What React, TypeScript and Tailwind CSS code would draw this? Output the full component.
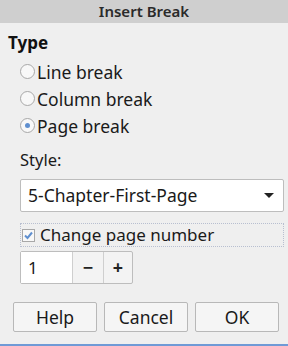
import React from "react";

const font = { fontFamily: '"Noto Sans", "Open Sans", sans-serif' };

function Radio({ checked, label }: { checked?: boolean; label: string }) {
  return (
    <div className="flex items-center h-[27px]">
      <div className="w-[15px] h-[15px] rounded-full border border-[#a8a8a8] bg-[#f8f8f8] flex items-center justify-center">
        {checked && <div className="w-[5px] h-[5px] rounded-full bg-[#5f8fcf]" />}
      </div>
      <span className="ml-[2px] text-[17.5px] text-[#1a1a1a] leading-[22px]">{label}</span>
    </div>
  );
}

export default function App() {
  return (
    <div className="w-[288px] h-[346px] bg-[#efefef] flex flex-col" style={font}>
      <div className="h-[23px] bg-[#cfcfcf] flex items-center justify-center text-[15px] font-semibold text-[#2a2a2a]">
        Insert Break
      </div>
      <div className="px-[8px] pt-[9px] flex-1 flex flex-col">
        <div className="text-[17px] font-bold text-[#111] leading-[22px]">Type</div>
        <div className="pl-[12px] flex flex-col mt-[4px]">
          <Radio label="Line break" />
          <Radio label="Column break" />
          <Radio checked label="Page break" />
        </div>
        <div className="pl-[12px] mt-[10px] text-[16.5px] text-[#1a1a1a] leading-[22px]">Style:</div>
        <div className="ml-[12px] mt-[8px] w-[264px] h-[33px] bg-white border border-[#bdbdbd] rounded-[2px] flex items-center justify-between pl-[7px] pr-[9px]">
          <span className="text-[17.5px] text-[#1a1a1a]">5-Chapter-First-Page</span>
          <svg width="10" height="6" viewBox="0 0 10 6"><polygon points="0,0 10,0 5,5" fill="#222" /></svg>
        </div>
        <div className="ml-[12px] mt-[11px] w-[264px] h-[24px] border border-dotted border-[#b8bfd0] flex items-center pl-[1px]">
          <div className="w-[13px] h-[13px] border border-[#a8a8a8] bg-[#f8f8f8] flex items-center justify-center">
            <svg width="11" height="11" viewBox="0 0 11 11"><polyline points="2,5.5 4.5,8 9,2.5" fill="none" stroke="#5f8fcf" strokeWidth="2" /></svg>
          </div>
          <span className="ml-[5px] text-[17px] text-[#1a1a1a] leading-[22px]">Change page number</span>
        </div>
        <div className="ml-[12px] mt-[4px] w-[113px] h-[33px] flex border border-[#bdbdbd] rounded-[2px] bg-[#f3f3f3]">
          <div className="w-[52px] bg-white border-r border-[#cfcfcf] flex items-center pl-[7px] text-[17px] text-[#1a1a1a]">1</div>
          <div className="w-[31px] border-r border-[#cfcfcf] flex items-center justify-center text-[18px] font-bold text-[#222]">−</div>
          <div className="flex-1 flex items-center justify-center text-[18px] font-bold text-[#222]">+</div>
        </div>
        <div className="flex mt-[18px] ml-[5px] gap-[7px]">
          {["Help", "Cancel", "OK"].map((t) => (
            <div key={t} className="w-[84px] h-[30px] bg-[#f5f5f5] border border-[#b8b8b8] rounded-[2px] flex items-center justify-center text-[17.5px] text-[#1a1a1a]">
              {t}
            </div>
          ))}
        </div>
      </div>
      <div className="h-[2px] bg-[#6f9ad6]" />
    </div>
  );
}
